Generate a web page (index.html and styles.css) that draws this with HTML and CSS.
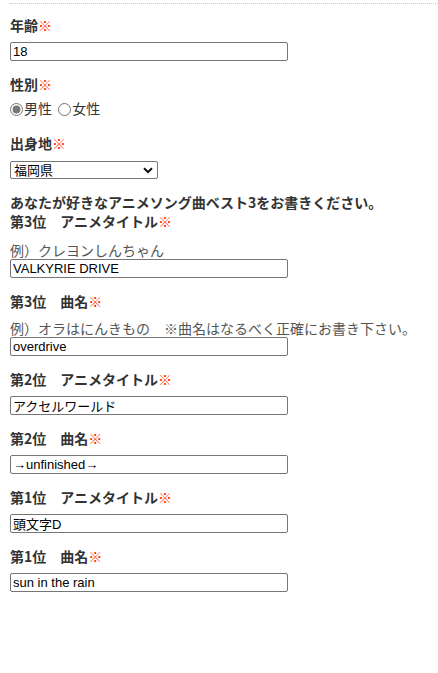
FILE: index.html
```html
<!DOCTYPE html>
<html lang="ja">
<head>
    <meta charset="UTF-8">
    <meta name="viewport" content="width=device-width, initial-scale=1.0">
    <title>アンケート</title>
    <link rel="stylesheet" href="styles.css">
</head>
<body>
    <div class="formBox">
        <div class="field">
            <div class="label">年齢<span class="req">※</span></div>
            <input class="txt" type="text" value="18">
        </div>
        <div class="field">
            <div class="label">性別<span class="req">※</span></div>
            <div class="radios">
                <label><input type="radio" name="sex" checked>男性</label>
                <label><input type="radio" name="sex">女性</label>
            </div>
        </div>
        <div class="field fieldPref">
            <div class="label">出身地<span class="req">※</span></div>
            <div class="selWrap">
                <select class="pref">
                    <option>福岡県</option>
                </select>
                <svg class="chev" width="10" height="7" viewBox="0 0 10 7"><path d="M1 1.2 L5 5 L9 1.2" fill="none" stroke="#111" stroke-width="2"/></svg>
            </div>
        </div>
        <div class="intro">あなたが好きなアニメソング曲ベスト3をお書きください。</div>
        <div class="field">
            <div class="label lblTight">第3位　アニメタイトル<span class="req">※</span></div>
            <div class="hint hintFirst">例）クレヨンしんちゃん</div>
            <input class="txt noGap" type="text" value="VALKYRIE DRIVE">
        </div>
        <div class="field">
            <div class="label">第3位　曲名<span class="req">※</span></div>
            <div class="hint">例）オラはにんきもの　※曲名はなるべく正確にお書き下さい。</div>
            <input class="txt noGap" type="text" value="overdrive">
        </div>
        <div class="field">
            <div class="label">第2位　アニメタイトル<span class="req">※</span></div>
            <input class="txt" type="text" value="アクセルワールド">
        </div>
        <div class="field">
            <div class="label">第2位　曲名<span class="req">※</span></div>
            <input class="txt" type="text" value="→unfinished→">
        </div>
        <div class="field">
            <div class="label">第1位　アニメタイトル<span class="req">※</span></div>
            <input class="txt" type="text" value="頭文字D">
        </div>
        <div class="field">
            <div class="label">第1位　曲名<span class="req">※</span></div>
            <input class="txt" type="text" value="sun in the rain">
        </div>
    </div>
</body>
</html>
```

FILE: styles.css
```css
body{
    margin: 0;
    font-family: "Noto Sans CJK JP", "Noto Sans", sans-serif;
    font-size: 14px;
    color: #333;
}
.formBox{
    margin-left: 10px;
    margin-top: 3px;
    border-top: 1px dotted #c8c8c8;
    padding-top: 11px;
}
.field{
    margin-bottom: 13px;
}
.label{
    font-weight: bold;
    line-height: 20px;
    height: 20px;
}
.req{
    color: #ff2a00;
    font-weight: normal;
}
.txt{
    display: block;
    box-sizing: border-box;
    width: 278px;
    height: 19px;
    margin: 7px 0 0 0;
    padding: 0 2px;
    border: 1px solid #767676;
    border-radius: 2px;
    font-family: "Liberation Sans", "Noto Sans CJK JP", sans-serif;
    font-size: 13px;
    color: #000;
}
.noGap{
    margin-top: 0;
}
.radios{
    margin-top: 4px;
    line-height: 20px;
    color: #333;
}
.radios label{
    margin-right: 3px;
}
.radios input{
    accent-color: #777;
    width: 13px;
    height: 13px;
    margin: 0 1px 0 0;
    vertical-align: -2px;
}
.fieldPref{
    margin-top: 15px;
    margin-bottom: 14px;
}
.selWrap{
    position: relative;
    width: 148px;
    margin-top: 8px;
}
.pref{
    display: block;
    box-sizing: border-box;
    width: 148px;
    height: 18px;
    padding: 0 0 0 3px;
    border: 1px solid #767676;
    border-radius: 2px;
    background: #fff;
    appearance: none;
    font-family: "Noto Sans CJK JP", sans-serif;
    font-size: 13px;
    line-height: 16px;
    color: #000;
}
.chev{
    position: absolute;
    right: 5px;
    top: 6px;
    pointer-events: none;
}
.intro{
    font-weight: bold;
    line-height: 19px;
}
.lblTight{
    line-height: 19px;
    height: 19px;
}
.hint{
    color: #555;
    line-height: 18px;
    margin-top: 8px;
}
.hintFirst{
    margin-top: 10px;
}
```
